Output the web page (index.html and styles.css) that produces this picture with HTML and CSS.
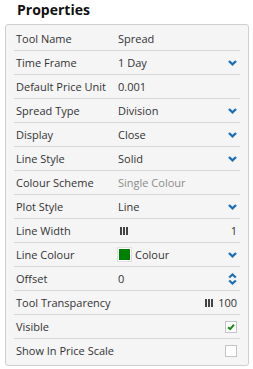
FILE: index.html
```html
<!DOCTYPE html>
<html>
<head>
<meta charset="utf-8">
<link rel="stylesheet" href="styles.css">
</head>
<body>
<h1 class="title">Properties</h1>
<div class="panel">
  <div class="row"><span class="label">Tool Name</span><span class="value">Spread</span></div>
  <div class="row"><span class="label">Time Frame</span><span class="value">1 Day</span><svg class="chev" viewBox="0 0 9 6"><path d="M1 1 L4.5 4.3 L8 1" /></svg></div>
  <div class="row"><span class="label">Default Price Unit</span><span class="value">0.001</span></div>
  <div class="row"><span class="label">Spread Type</span><span class="value">Division</span><svg class="chev" viewBox="0 0 9 6"><path d="M1 1 L4.5 4.3 L8 1" /></svg></div>
  <div class="row"><span class="label">Display</span><span class="value">Close</span><svg class="chev" viewBox="0 0 9 6"><path d="M1 1 L4.5 4.3 L8 1" /></svg></div>
  <div class="row"><span class="label">Line Style</span><span class="value">Solid</span><svg class="chev" viewBox="0 0 9 6"><path d="M1 1 L4.5 4.3 L8 1" /></svg></div>
  <div class="row"><span class="label">Colour Scheme</span><span class="value muted">Single Colour</span></div>
  <div class="row"><span class="label">Plot Style</span><span class="value">Line</span><svg class="chev" viewBox="0 0 9 6"><path d="M1 1 L4.5 4.3 L8 1" /></svg></div>
  <div class="row"><span class="label">Line Width</span><span class="value"><span class="bars"><i></i><i></i><i></i></span></span><span class="num">1</span></div>
  <div class="row"><span class="label">Line Colour</span><span class="value colour"><span class="swatch"></span>Colour</span><svg class="chev" viewBox="0 0 9 6"><path d="M1 1 L4.5 4.3 L8 1" /></svg></div>
  <div class="row"><span class="label">Offset</span><span class="value">0</span><svg class="spin" viewBox="0 0 9 12"><path d="M1.2 4.5 L4.5 1.5 L7.8 4.5 M1.2 7.5 L4.5 10.5 L7.8 7.5" /></svg></div>
  <div class="row"><span class="label wide">Tool Transparency</span><span class="bars"><i></i><i></i><i></i></span><span class="num">100</span></div>
  <div class="row"><span class="label">Visible</span><span class="box"><svg viewBox="0 0 12 12"><path d="M2.5 6.3 L5 8.6 L9.6 3.2" /></svg></span></div>
  <div class="row"><span class="label wide">Show In Price Scale</span><span class="box"></span></div>
</div>
</body>
</html>
```
FILE: styles.css
```css
html, body {
  margin: 0;
  padding: 0;
  background: #ffffff;
}
body {
  font-family: "Open Sans", "DejaVu Sans", sans-serif;
  font-size: 11px;
  color: #333333;
  width: 253px;
}
.title {
  margin: 0;
  padding: 0 0 0 17px;
  font-size: 14px;
  font-weight: 700;
  line-height: 19px;
  height: 24px;
  color: #111111;
}
.panel {
  margin: 0 4px 0 5px;
  background: #f5f5f5;
  border: 1px solid #cfcfcf;
  border-radius: 3px;
  padding: 2px 8px 0 8px;
  height: 338px;
}
.row {
  display: flex;
  align-items: center;
  height: 23px;
  border-bottom: 1px solid #d6d6d6;
  padding: 0 3px 0 2px;
}
.row:last-child {
  border-bottom: none;
}
.label {
  width: 102px;
  flex: none;
  white-space: nowrap;
}
.label.wide {
  flex: 1;
}
.value {
  flex: 1;
  white-space: nowrap;
  display: flex;
  align-items: center;
}
.muted {
  color: #8c8c8c;
}
.chev {
  width: 9px;
  height: 6px;
  fill: none;
  stroke: #1a6fb6;
  stroke-width: 2.4;
  flex: none;
}
.spin {
  width: 9px;
  height: 12px;
  fill: none;
  stroke: #1a6fb6;
  stroke-width: 2.2;
  flex: none;
}
.bars {
  display: inline-flex;
  gap: 1px;
  margin-left: 2px;
  flex: none;
}
.bars i {
  display: block;
  width: 2px;
  height: 8px;
  background: #444444;
}
.row > .bars {
  margin-right: 5px;
}
.num {
  text-align: right;
}
.swatch {
  width: 13px;
  height: 13px;
  background: #008000;
  border: 1px solid #ffffff;
  box-sizing: border-box;
  margin-right: 4px;
  outline: 1px solid #e0e0e0;
}
.box {
  margin-left: auto;
  width: 12px;
  height: 12px;
  box-sizing: border-box;
  border: 1px solid #c4c4c4;
  background: #ffffff;
  display: flex;
}
.box svg {
  width: 10px;
  height: 10px;
  fill: none;
  stroke: #158a15;
  stroke-width: 2.4;
}
```
